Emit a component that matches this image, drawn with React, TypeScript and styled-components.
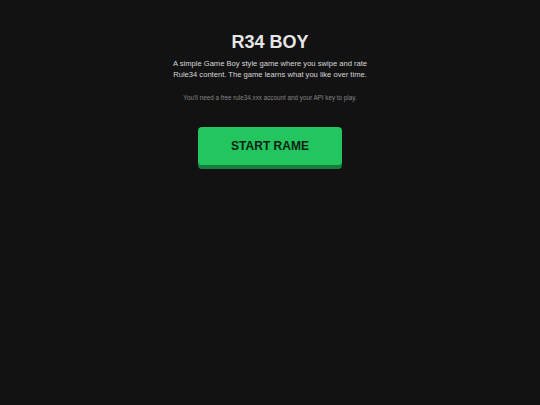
import React from "react";
import styled, { createGlobalStyle } from "styled-components";

const Global = createGlobalStyle`
  html, body { margin: 0; padding: 0; background: #121212; }
  body { font-family: "Liberation Sans", Arial, sans-serif; color: #e5e5e5; }
`;

const Page = styled.main`
  min-height: 405px;
  display: flex;
  flex-direction: column;
  align-items: center;
  padding-top: 32px;
  box-sizing: border-box;
`;

const Title = styled.h1`
  margin: 0;
  font-size: 18px;
  font-weight: 700;
  line-height: 20px;
  color: #e6e6e6;
`;

const Description = styled.p`
  margin: 6px 0 0;
  font-size: 7.6px;
  line-height: 11px;
  text-align: center;
  color: #d8d8d8;
  max-width: 200px;
`;

const Note = styled.p`
  margin: 13px 0 0;
  font-size: 6.3px;
  line-height: 9px;
  color: #858585;
  text-align: center;
`;

const StartButton = styled.button`
  margin-top: 25px;
  width: 144px;
  height: 38px;
  border: none;
  border-radius: 4px;
  background: #22c55e;
  box-shadow: 0 4px 0 #15803d;
  color: #0d1f13;
  font-family: "Liberation Sans", Arial, sans-serif;
  font-size: 12px;
  font-weight: 700;
  cursor: pointer;
`;

export default function App() {
  return (
    <>
      <Global />
      <Page>
        <Title>R34 BOY</Title>
        <Description>
          A simple Game Boy style game where you swipe and rate Rule34 content. The game learns what you like over time.
        </Description>
        <Note>You'll need a free rule34.xxx account and your API key to play.</Note>
        <StartButton>START RAME</StartButton>
      </Page>
    </>
  );
}
